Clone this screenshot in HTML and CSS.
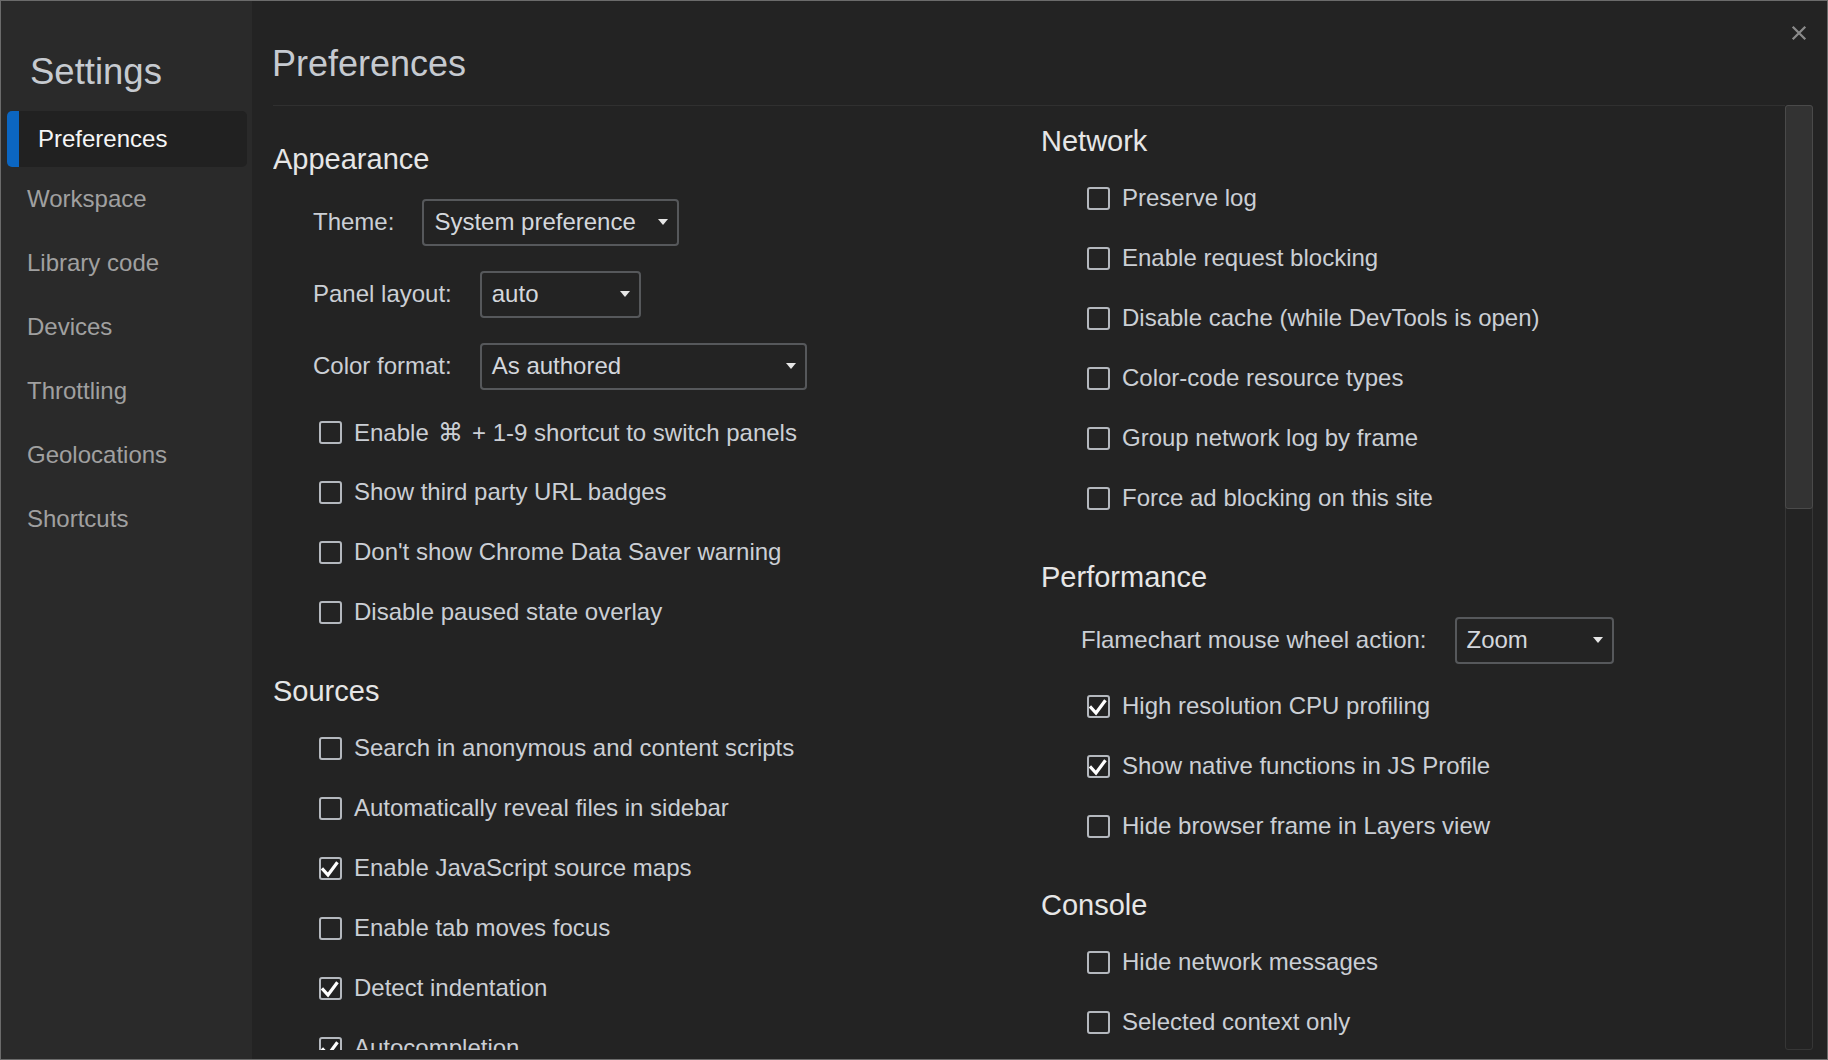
FILE: index.html
```html
<!DOCTYPE html>
<html lang="en">
<head>
<meta charset="utf-8">
<title>Settings</title>
<link rel="stylesheet" href="styles.css">
</head>
<body>
<div class="window">
  <aside class="sidebar">
    <h1 class="sidebar-title">Settings</h1>
    <nav class="nav">
      <div class="nav-item selected">Preferences</div>
      <div class="nav-item">Workspace</div>
      <div class="nav-item">Library code</div>
      <div class="nav-item">Devices</div>
      <div class="nav-item">Throttling</div>
      <div class="nav-item">Geolocations</div>
      <div class="nav-item">Shortcuts</div>
    </nav>
  </aside>
  <main class="main">
    <h1 class="main-title">Preferences</h1>
    <div class="main-body">
      <div class="content">
        <div class="col col-left">
          <section class="section">
            <h2>Appearance</h2>
            <div class="select-row"><span>Theme:</span><div class="select select-theme"><span>System preference</span><i class="arrow"></i></div></div>
            <div class="select-row"><span>Panel layout:</span><div class="select select-panel"><span>auto</span><i class="arrow"></i></div></div>
            <div class="select-row"><span>Color format:</span><div class="select select-color"><span>As authored</span><i class="arrow"></i></div></div>
            <label class="check-row"><span class="box"></span><span>Enable <span class="cmd">⌘</span> + 1-9 shortcut to switch panels</span></label>
            <label class="check-row"><span class="box"></span><span>Show third party URL badges</span></label>
            <label class="check-row"><span class="box"></span><span>Don't show Chrome Data Saver warning</span></label>
            <label class="check-row"><span class="box"></span><span>Disable paused state overlay</span></label>
          </section>
          <section class="section">
            <h2>Sources</h2>
            <label class="check-row"><span class="box"></span><span>Search in anonymous and content scripts</span></label>
            <label class="check-row"><span class="box"></span><span>Automatically reveal files in sidebar</span></label>
            <label class="check-row"><span class="box"><svg viewBox="0 0 23 23"><path d="M4 12.5 L9 18 L17.5 6.5"/></svg></span><span>Enable JavaScript source maps</span></label>
            <label class="check-row"><span class="box"></span><span>Enable tab moves focus</span></label>
            <label class="check-row"><span class="box"><svg viewBox="0 0 23 23"><path d="M4 12.5 L9 18 L17.5 6.5"/></svg></span><span>Detect indentation</span></label>
            <label class="check-row"><span class="box"><svg viewBox="0 0 23 23"><path d="M4 12.5 L9 18 L17.5 6.5"/></svg></span><span>Autocompletion</span></label>
          </section>
        </div>
        <div class="col col-right">
          <section class="section">
            <h2>Network</h2>
            <label class="check-row"><span class="box"></span><span>Preserve log</span></label>
            <label class="check-row"><span class="box"></span><span>Enable request blocking</span></label>
            <label class="check-row"><span class="box"></span><span>Disable cache (while DevTools is open)</span></label>
            <label class="check-row"><span class="box"></span><span>Color-code resource types</span></label>
            <label class="check-row"><span class="box"></span><span>Group network log by frame</span></label>
            <label class="check-row"><span class="box"></span><span>Force ad blocking on this site</span></label>
          </section>
          <section class="section">
            <h2>Performance</h2>
            <div class="select-row"><span>Flamechart mouse wheel action:</span><div class="select select-zoom"><span>Zoom</span><i class="arrow"></i></div></div>
            <label class="check-row"><span class="box"><svg viewBox="0 0 23 23"><path d="M4 12.5 L9 18 L17.5 6.5"/></svg></span><span>High resolution CPU profiling</span></label>
            <label class="check-row"><span class="box"><svg viewBox="0 0 23 23"><path d="M4 12.5 L9 18 L17.5 6.5"/></svg></span><span>Show native functions in JS Profile</span></label>
            <label class="check-row"><span class="box"></span><span>Hide browser frame in Layers view</span></label>
          </section>
          <section class="section">
            <h2>Console</h2>
            <label class="check-row"><span class="box"></span><span>Hide network messages</span></label>
            <label class="check-row"><span class="box"></span><span>Selected context only</span></label>
          </section>
        </div>
      </div>
      <div class="scrollbar"><div class="thumb"></div></div>
    </div>
  </main>
  <button class="close" aria-label="Close"><svg viewBox="0 0 14 14"><path d="M1.5 1.5 L12.5 12.5 M12.5 1.5 L1.5 12.5"/></svg></button>
</div>
</body>
</html>
```

FILE: styles.css
```css
html, body {
  margin: 0;
  padding: 0;
  background: #232323;
}

body {
  font-family: "Liberation Sans", Arial, "DejaVu Sans", sans-serif;
}

.window {
  position: relative;
  width: 1828px;
  height: 1060px;
  box-sizing: border-box;
  border: 1px solid #6b6b6b;
  display: flex;
  overflow: hidden;
  background: #232323;
}

/* Sidebar */
.sidebar {
  width: 251px;
  flex: none;
  background: #2a2a2a;
}

.sidebar-title {
  margin: 0;
  padding: 49px 0 17px 29px;
  font-size: 36.5px;
  line-height: 44px;
  font-weight: normal;
  color: #c6cad0;
}

.nav {
  display: flex;
  flex-direction: column;
}

.nav-item {
  height: 64px;
  display: flex;
  align-items: center;
  padding-left: 26px;
  font-size: 24px;
  color: #a0a0a0;
}

.nav-item.selected {
  height: 56px;
  margin: 0 5px 0 6px;
  padding-left: 19px;
  border-left: 12px solid #0b66c2;
  border-radius: 5px;
  background: #212121;
  color: #f6f6f6;
}

/* Main */
.main {
  flex: 1;
  min-width: 0;
  display: flex;
  flex-direction: column;
}

.main-title {
  margin: 0;
  padding: 41px 0 19px 20px;
  font-size: 36px;
  line-height: 44px;
  font-weight: normal;
  color: #c6cad0;
}

.main-body {
  flex: 1;
  min-height: 0;
  display: flex;
  padding: 0 14px 9px 21px;
}

.content {
  flex: 1;
  min-width: 0;
  border-top: 1px solid #303030;
  display: grid;
  grid-template-columns: 768px 1fr;
  align-items: start;
  overflow: hidden;
}

.col-left {
  padding-top: 35px;
}

.col-right {
  padding-top: 17px;
}

.section h2 {
  margin: 0 0 9px;
  font-size: 29px;
  line-height: 36px;
  font-weight: normal;
  color: #e6e6e6;
}

.section + .section h2 {
  margin-top: 31px;
}

.select-row {
  height: 72px;
  display: flex;
  align-items: center;
  gap: 28px;
  padding-left: 40px;
  font-size: 24px;
  color: #cbcfd5;
}

h2 + .select-row {
  margin-top: 1px;
}

.select {
  height: 47px;
  box-sizing: border-box;
  border: 2px solid #56585b;
  border-radius: 4px;
  display: flex;
  align-items: center;
  justify-content: space-between;
  padding: 0 9px 0 10px;
  color: #d4d7dc;
}

.select-theme { width: 257px; }
.select-panel { width: 161px; }
.select-color { width: 327px; }
.select-zoom  { width: 159px; }

.arrow {
  width: 0;
  height: 0;
  border-left: 5.5px solid transparent;
  border-right: 5.5px solid transparent;
  border-top: 6px solid #e6e6e6;
}

.check-row {
  height: 60px;
  display: flex;
  align-items: center;
  gap: 12px;
  padding-left: 46px;
  font-size: 24px;
  color: #cbcfd5;
  white-space: nowrap;
}

.cmd {
  display: inline-block;
  width: 30px;
  text-align: center;
  font-size: 25px;
}

.box {
  width: 23px;
  height: 23px;
  flex: none;
  box-sizing: border-box;
  border: 2px solid #b4b8be;
  border-radius: 3px;
  position: relative;
}

.box svg {
  position: absolute;
  left: -2px;
  top: -2px;
  width: 23px;
  height: 23px;
}

.box svg path {
  fill: none;
  stroke: #ffffff;
  stroke-width: 3.2;
  stroke-linecap: square;
  stroke-linejoin: miter;
}

/* Scrollbar */
.scrollbar {
  width: 28px;
  flex: none;
  box-sizing: border-box;
  border: 1px solid #363636;
  border-radius: 3px;
}

.thumb {
  height: 404px;
  margin: -1px;
  box-sizing: border-box;
  border: 1px solid #4a4a4a;
  border-radius: 3px;
  background: #333333;
}

/* Close */
.close {
  position: absolute;
  top: 24px;
  right: 20px;
  width: 16px;
  height: 16px;
  padding: 0;
  border: 0;
  background: transparent;
}

.close svg {
  width: 16px;
  height: 16px;
  display: block;
}

.close svg path {
  stroke: #8a8a8a;
  stroke-width: 2;
  fill: none;
}
```
